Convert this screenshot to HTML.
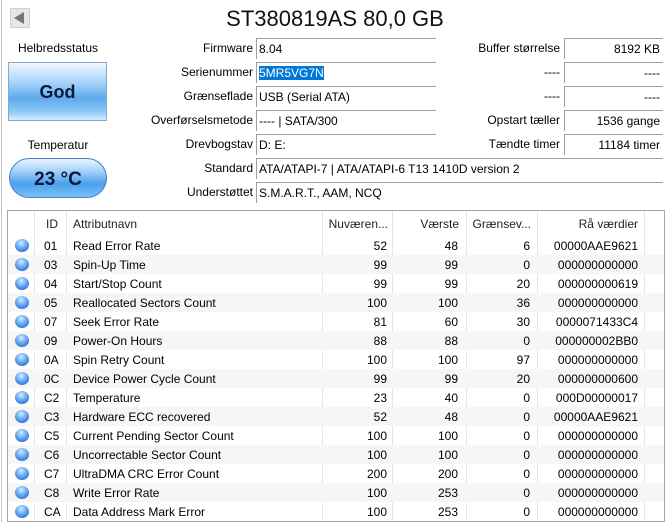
<!DOCTYPE html>
<html><head><meta charset="utf-8"><style>
*{margin:0;padding:0;box-sizing:border-box}
body{width:670px;height:522px;background:#fff;font-family:"Liberation Sans",sans-serif;font-size:12px;color:#000;position:relative;overflow:hidden}
.a{position:absolute;white-space:nowrap}
.lbl{position:absolute;text-align:right;height:20px;line-height:22px}
.box{position:absolute;height:21px;line-height:21px;border-top:1px solid #a0a0a0;border-left:1px solid #a0a0a0;padding:0 2px;white-space:nowrap}
.r{text-align:right;padding-right:3px}
.row{position:absolute;left:8px;width:656px;height:19px;line-height:20px}
.row.g{background:#f6f6f6}
.row span{position:absolute;white-space:nowrap}
.dot{position:absolute;left:7px;top:3px;width:14px;height:13px;border-radius:50%;background:radial-gradient(circle at 45% 30%,#d8ecff 0%,#6fb0f5 40%,#2d6fd8 80%,#4a52c0 100%)}
.vl{position:absolute;top:211px;height:310px;width:1px;background:#e5e5e5}
</style></head><body>
<div class="a" style="left:1px;top:0;width:1px;height:522px;background:#c8c8c8"></div>
<div class="a" style="left:10px;top:8px;width:20px;height:20px;background:#e6e6e6;border:1px solid #d0d0d0"></div>
<div class="a" style="left:14px;top:12px;width:0;height:0;border-top:6px solid transparent;border-bottom:6px solid transparent;border-right:10px solid #777"></div>
<div class="a" style="left:0;width:670px;top:4px;text-align:center;font-size:22px;line-height:30px;color:#111">ST380819AS 80,0 GB</div>

<div class="a" style="left:8px;width:100px;top:41px;text-align:center">Helbredsstatus</div>
<div class="a" style="left:8px;top:62px;width:99px;height:59px;border:1px solid #8aa6c8;background:linear-gradient(#f0f7ff 0%,#a6d2f8 35%,#5eaaee 62%,#8cc8f6 85%,#d8ecfc 100%);text-align:center;line-height:59px;font-weight:bold;font-size:18px;color:#0b1a3a">God</div>
<div class="a" style="left:8px;width:100px;top:138px;text-align:center">Temperatur</div>
<div class="a" style="left:9px;top:158px;width:98px;height:40px;border-radius:20px;border:1px solid #4a80c8;background:linear-gradient(#eaf5ff 0%,#9ccdf8 35%,#4aa0ec 65%,#7cc0f5 100%);text-align:center;line-height:42px;font-weight:bold;font-size:19px;color:#0b1a3a">23 °C</div>

<div class="lbl" style="left:150px;width:103px;top:37px">Firmware</div>
<div class="box" style="left:256px;width:180px;top:38px">8.04</div>
<div class="lbl" style="left:150px;width:103px;top:61px">Serienummer</div>
<div class="box" style="left:256px;width:180px;top:62px"><span style="background:#0078d7;color:#fff">5MR5VG7N</span></div>
<div class="lbl" style="left:150px;width:103px;top:85px">Grænseflade</div>
<div class="box" style="left:256px;width:180px;top:86px">USB (Serial ATA)</div>
<div class="lbl" style="left:140px;width:113px;top:109px">Overførselsmetode</div>
<div class="box" style="left:256px;width:180px;top:110px">---- | SATA/300</div>
<div class="lbl" style="left:150px;width:103px;top:133px">Drevbogstav</div>
<div class="box" style="left:256px;width:180px;top:134px">D: E:</div>
<div class="lbl" style="left:150px;width:103px;top:157px">Standard</div>
<div class="box" style="left:256px;width:407px;top:158px">ATA/ATAPI-7 | ATA/ATAPI-6 T13 1410D version 2</div>
<div class="lbl" style="left:150px;width:103px;top:181px">Understøttet</div>
<div class="box" style="left:256px;width:407px;top:182px">S.M.A.R.T., AAM, NCQ</div>

<div class="lbl" style="left:440px;width:120px;top:37px">Buffer størrelse</div>
<div class="box r" style="left:564px;width:99px;top:38px">8192 KB</div>
<div class="lbl" style="left:440px;width:120px;top:61px">----</div>
<div class="box r" style="left:564px;width:99px;top:62px">----</div>
<div class="lbl" style="left:440px;width:120px;top:85px">----</div>
<div class="box r" style="left:564px;width:99px;top:86px">----</div>
<div class="lbl" style="left:440px;width:120px;top:109px">Opstart tæller</div>
<div class="box r" style="left:564px;width:99px;top:110px">1536 gange</div>
<div class="lbl" style="left:440px;width:120px;top:133px">Tændte timer</div>
<div class="box r" style="left:564px;width:99px;top:134px">11184 timer</div>

<div class="a" style="left:7px;top:210px;width:658px;height:312px;border:1px solid #a8a8a8"></div>
<div class="vl" style="left:34px"></div><div class="vl" style="left:66px"></div><div class="vl" style="left:322px"></div><div class="vl" style="left:392px"></div><div class="vl" style="left:466px"></div><div class="vl" style="left:537px"></div><div class="vl" style="left:644px"></div>
<div class="row" style="top:213px;height:22px;line-height:22px;color:#222"><span style="left:38px">ID</span><span style="left:65px">Attributnavn</span><span style="right:276px">Nuværen...</span><span style="right:205px">Værste</span><span style="right:133px">Grænsev...</span><span style="right:26px">Rå værdier</span></div>
<div id="rows"></div>
<script>
var d=[["01","Read Error Rate",52,48,6,"00000AAE9621"],["03","Spin-Up Time",99,99,0,"000000000000"],["04","Start/Stop Count",99,99,20,"000000000619"],["05","Reallocated Sectors Count",100,100,36,"000000000000"],["07","Seek Error Rate",81,60,30,"0000071433C4"],["09","Power-On Hours",88,88,0,"000000002BB0"],["0A","Spin Retry Count",100,100,97,"000000000000"],["0C","Device Power Cycle Count",99,99,20,"000000000600"],["C2","Temperature",23,40,0,"000D00000017"],["C3","Hardware ECC recovered",52,48,0,"00000AAE9621"],["C5","Current Pending Sector Count",100,100,0,"000000000000"],["C6","Uncorrectable Sector Count",100,100,0,"000000000000"],["C7","UltraDMA CRC Error Count",200,200,0,"000000000000"],["C8","Write Error Rate",100,253,0,"000000000000"],["CA","Data Address Mark Error",100,253,0,"000000000000"]];
var h="";d.forEach(function(r,i){h+='<div class="row'+(i%2?' g':'')+'" style="top:'+(236+i*19)+'px"><i class="dot"></i><span style="left:36px">'+r[0]+'</span><span style="left:65px">'+r[1]+'</span><span style="right:277px">'+r[2]+'</span><span style="right:206px">'+r[3]+'</span><span style="right:134px">'+r[4]+'</span><span style="right:26px">'+r[5]+'</span></div>'});
document.getElementById("rows").outerHTML=h;
</script>
</body></html>
